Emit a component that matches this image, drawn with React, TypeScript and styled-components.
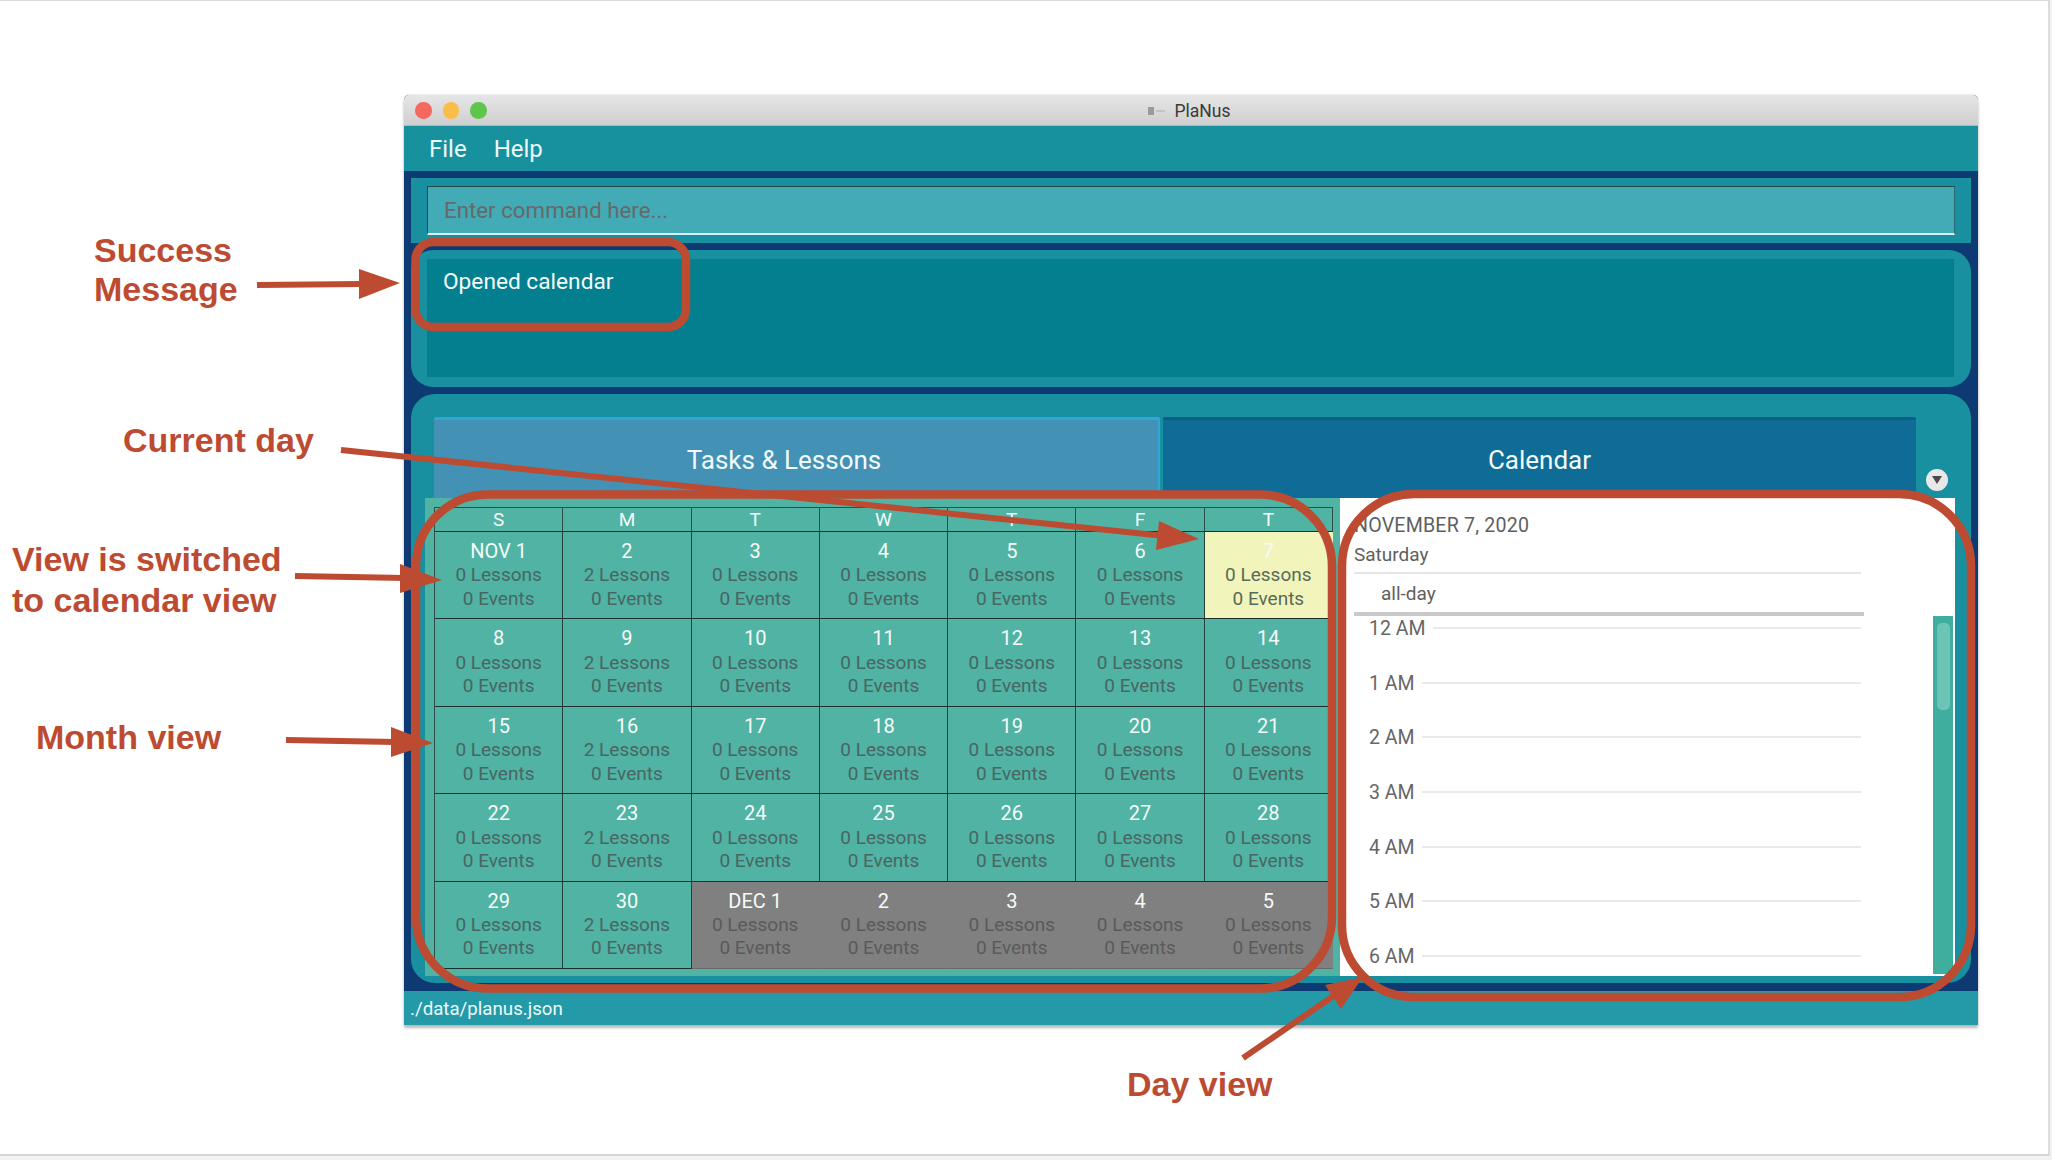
import React from 'react';
import styled, { createGlobalStyle } from 'styled-components';

const GlobalStyle = createGlobalStyle`
  html, body {
    margin: 0;
    padding: 0;
    background: #fff;
  }
  * {
    box-sizing: border-box;
  }
`;

const ANNOTATION = '#bc4b32';

const Page = styled.div`
  position: relative;
  width: 2052px;
  height: 1160px;
  overflow: hidden;
  background: #f2f2f2;
  font-family: Roboto, "Liberation Sans", sans-serif;
`;

const Sheet = styled.div`
  width: 2050px;
  height: 1156px;
  padding: 94px 0 0 404px;
  background: #fff;
  border-top: 1px solid #d9d9d9;
  border-right: 2px solid #dcdcdc;
  border-bottom: 2px solid #d4d4d4;
`;

const Window = styled.div`
  width: 1574px;
  height: 930px;
  display: flex;
  flex-direction: column;
  background: #0e3a74;
  border-radius: 5px 5px 0 0;
  box-shadow: 0 3px 3px rgba(0, 0, 0, 0.28), 0 -1px 2px rgba(0, 0, 0, 0.08);
  overflow: hidden;
`;

const TitleBar = styled.div`
  position: relative;
  height: 31px;
  flex-shrink: 0;
  display: flex;
  align-items: center;
  justify-content: center;
  background: linear-gradient(#e6e6e6, #cfcfcf);
  border-bottom: 1px solid #b5b5b5;
`;

const Lights = styled.div`
  position: absolute;
  left: 11px;
  top: 7px;
  display: flex;
  gap: 11px;
`;

const Light = styled.span<{ $color: string }>`
  width: 16.5px;
  height: 16.5px;
  border-radius: 50%;
  background: ${({ $color }) => $color};
`;

const WindowTitle = styled.div`
  display: flex;
  align-items: center;
  gap: 9px;
  margin-left: -4px;
  padding-top: 1px;
  font-size: 17.5px;
  color: #3a3a3a;
`;

const MenuBar = styled.div`
  height: 45px;
  flex-shrink: 0;
  display: flex;
  align-items: center;
  gap: 27px;
  padding: 1px 0 0 25px;
  background: #18919f;
`;

const MenuItem = styled.span`
  font-size: 24px;
  color: #eef9f9;
`;

const Body = styled.div`
  flex: 1;
  display: flex;
  flex-direction: column;
  padding: 7px 7px 8px;
`;

const CommandPanel = styled.div`
  height: 65px;
  flex-shrink: 0;
  padding: 8px 16px 8px 16px;
  background: #18909f;
`;

const CommandInput = styled.div`
  height: 49px;
  display: flex;
  align-items: center;
  padding-left: 16px;
  background: #42abb5;
  border: 1px solid #24484c;
  border-bottom: 2px solid #d5f0f1;
  border-right-color: #2c6a70;
  font-size: 22.3px;
  color: #696868;
`;

const ResultPanel = styled.div`
  height: 137px;
  flex-shrink: 0;
  margin-top: 7px;
  padding: 9px 17px 10px 16px;
  background: #18909f;
  border-radius: 22px;
`;

const ResultBox = styled.div`
  height: 100%;
  padding: 10px 16px;
  background: #037f8f;
  font-size: 22.7px;
  line-height: 26px;
  color: #f4fbfb;
`;

const MainPanel = styled.div`
  height: 589px;
  flex-shrink: 0;
  margin-top: 7px;
  padding: 23px 16px 7px 14px;
  background: #18909f;
  border-radius: 24px;
`;

const TabRow = styled.div`
  height: 81px;
  display: flex;
  gap: 3px;
  padding-left: 9px;
`;

const Tab = styled.div<{ $active?: boolean; $width: number; $textShift?: number }>`
  width: ${({ $width }) => $width}px;
  display: flex;
  align-items: center;
  justify-content: center;
  padding: 2px ${({ $textShift }) => $textShift ?? 0}px 0 0;
  font-size: 26px;
  color: #f2fafb;
  background: ${({ $active }) => ($active ? '#0f6c96' : '#4391b5')};
  border-top: 3px solid ${({ $active }) => ($active ? '#0d5f86' : '#2fa5dc')};
  border-right: ${({ $active }) => ($active ? 'none' : '2px solid #2fa5dc')};
  border-radius: 2px 2px 0 0;
`;

const TabMenu = styled.div`
  width: 22px;
  height: 22px;
  align-self: flex-end;
  margin: 0 0 7px 7px;
  display: flex;
  align-items: center;
  justify-content: center;
  border-radius: 50%;
  background: #e8e8e8;
`;

const Content = styled.div`
  display: flex;
  height: 478px;
`;

const MonthPanel = styled.div`
  width: 915px;
  flex-shrink: 0;
  padding: 9px 6px 8px 9px;
  background: #50b3a3;
`;

const MonthGrid = styled.div`
  display: grid;
  width: 899px;
  grid-template-columns: repeat(7, 1fr);
  grid-template-rows: 24px repeat(5, 87.4px);
  border-top: 1px solid #2c4f4b;
  border-left: 1px solid #2c4f4b;
`;

const WeekdayCell = styled.div`
  display: flex;
  align-items: center;
  justify-content: center;
  font-size: 19px;
  color: #f4fbfa;
  border-right: 1.5px solid #2c4f4b;
  border-bottom: 1.5px solid #1d2f2d;
`;

type CellKind = 'normal' | 'today' | 'other';

const DayCell = styled.div<{ $kind: CellKind }>`
  display: flex;
  flex-direction: column;
  align-items: center;
  padding-top: 8px;
  font-size: 19px;
  line-height: 23.4px;
  background: ${({ $kind }) =>
    $kind === 'today' ? '#f1f5bc' : $kind === 'other' ? '#808080' : 'transparent'};
  color: ${({ $kind }) =>
    $kind === 'today' ? '#5a6a59' : $kind === 'other' ? '#5a5a5a' : '#486663'};
  border-right: 1.5px solid ${({ $kind }) => ($kind === 'normal' ? '#22403d' : 'transparent')};
  border-bottom: 1.5px solid ${({ $kind }) => ($kind === 'other' ? '#6a6a6a' : '#1d2f2d')};
`;

const DayNumber = styled.div`
  font-size: 20px;
  color: #f6fbfa;
`;

const DayPanel = styled.div`
  width: 615px;
  flex-shrink: 0;
  display: flex;
  flex-direction: column;
  padding: 13px 2px 2px 14px;
  background: #fff;
  color: #5f5f5f;
  font-size: 19px;
`;

const DayTitle = styled.div`
  height: 30px;
  line-height: 30px;
  font-size: 19.6px;
  letter-spacing: 0.2px;
  flex-shrink: 0;
`;

const DayName = styled.div`
  width: 507px;
  height: 33px;
  line-height: 28px;
  flex-shrink: 0;
  border-bottom: 2px solid #e6e6e6;
`;

const AllDay = styled.div`
  width: 510px;
  height: 42px;
  flex-shrink: 0;
  padding: 8px 0 0 27px;
  line-height: 24px;
  border-bottom: 4px solid #c9c9c9;
`;

const Timeline = styled.div`
  flex: 1;
  min-height: 0;
  display: flex;
  justify-content: space-between;
`;

const Hours = styled.div`
  overflow: hidden;
`;

const HourRow = styled.div`
  width: 507px;
  height: 54.7px;
  display: flex;
  align-items: flex-start;
  gap: 7px;
  padding-left: 15px;
  color: #666;
  font-size: 19.5px;
  line-height: 26px;
`;

const HourLine = styled.div<{ $long?: boolean }>`
  flex: 1;
  height: 2px;
  margin-top: 11px;
  margin-right: ${({ $long }) => ($long ? '-7px' : '0')};
  background: #e9e9e9;
`;

const ScrollTrack = styled.div`
  width: 20px;
  padding: 7px 3px 0 4px;
  background: #3fae9f;
`;

const ScrollThumb = styled.div`
  height: 87px;
  border-radius: 5px;
  background: #6cc4b6;
`;

const StatusBar = styled.div`
  height: 34px;
  flex-shrink: 0;
  display: flex;
  align-items: center;
  padding: 2px 0 0 6px;
  background: #249aa9;
  font-size: 18.7px;
  color: #eef9f9;
`;

const Callout = styled.div<{ $x: number; $y: number }>`
  position: absolute;
  left: ${({ $x }) => $x}px;
  top: ${({ $y }) => $y}px;
  font-family: "Liberation Sans", Arial, sans-serif;
  font-weight: 700;
  font-size: 34px;
  line-height: 40px;
  white-space: nowrap;
  color: ${ANNOTATION};
`;

const Overlay = styled.svg`
  position: absolute;
  left: 0;
  top: 0;
  pointer-events: none;
`;

const WEEKDAYS = ['S', 'M', 'T', 'W', 'T', 'F', 'T'];

const CELLS = Array.from({ length: 35 }, (_, i) => {
  const isOther = i >= 30;
  const day = isOther ? i - 29 : i + 1;
  let label = String(day);
  if (i === 0) label = 'NOV 1';
  if (i === 30) label = 'DEC 1';
  const kind: CellKind = isOther ? 'other' : i === 6 ? 'today' : 'normal';
  const lessons = i % 7 === 1 && !isOther ? 2 : 0;
  return { id: i, label, kind, lessons };
});

const HOURS = ['12 AM', '1 AM', '2 AM', '3 AM', '4 AM', '5 AM', '6 AM'];

const Arrow = ({
  line,
  head,
}: {
  line: [number, number, number, number];
  head: string;
}) => (
  <>
    <line x1={line[0]} y1={line[1]} x2={line[2]} y2={line[3]} stroke={ANNOTATION} strokeWidth={6} />
    <polygon points={head} fill={ANNOTATION} />
  </>
);

export default function App() {
  return (
    <>
      <GlobalStyle />
      <Page>
        <Sheet>
          <Window>
            <TitleBar>
              <Lights>
                <Light $color="#f4695f" />
                <Light $color="#f9bd49" />
                <Light $color="#5ec54d" />
              </Lights>
              <WindowTitle>
                <svg width="18" height="8" viewBox="0 0 18 8">
                  <rect x="0" y="0" width="6" height="8" fill="#9a9a9a" />
                  <rect x="8" y="3" width="9" height="2" fill="#c4c4c4" />
                </svg>
                PlaNus
              </WindowTitle>
            </TitleBar>
            <MenuBar>
              <MenuItem>File</MenuItem>
              <MenuItem>Help</MenuItem>
            </MenuBar>
            <Body>
              <CommandPanel>
                <CommandInput>Enter command here...</CommandInput>
              </CommandPanel>
              <ResultPanel>
                <ResultBox>Opened calendar</ResultBox>
              </ResultPanel>
              <MainPanel>
                <TabRow>
                  <Tab $width={726} $textShift={24}>
                    Tasks &amp; Lessons
                  </Tab>
                  <Tab $width={753} $active>
                    Calendar
                  </Tab>
                  <TabMenu>
                    <svg width="10" height="8" viewBox="0 0 10 8">
                      <polygon points="0,0 10,0 5,8" fill="#4a4a4a" />
                    </svg>
                  </TabMenu>
                </TabRow>
                <Content>
                  <MonthPanel>
                    <MonthGrid>
                      {WEEKDAYS.map((day, i) => (
                        <WeekdayCell key={i}>{day}</WeekdayCell>
                      ))}
                      {CELLS.map((cell) => (
                        <DayCell key={cell.id} $kind={cell.kind}>
                          <DayNumber>{cell.label}</DayNumber>
                          <div>{cell.lessons} Lessons</div>
                          <div>0 Events</div>
                        </DayCell>
                      ))}
                    </MonthGrid>
                  </MonthPanel>
                  <DayPanel>
                    <DayTitle>NOVEMBER 7, 2020</DayTitle>
                    <DayName>Saturday</DayName>
                    <AllDay>all-day</AllDay>
                    <Timeline>
                      <Hours>
                        {HOURS.map((hour, i) => (
                          <HourRow key={hour}>
                            {hour}
                            <HourLine $long={i === 0} />
                          </HourRow>
                        ))}
                      </Hours>
                      <ScrollTrack>
                        <ScrollThumb />
                      </ScrollTrack>
                    </Timeline>
                  </DayPanel>
                </Content>
              </MainPanel>
            </Body>
            <StatusBar>./data/planus.json</StatusBar>
          </Window>
        </Sheet>

        <Callout $x={94} $y={230}>Success</Callout>
        <Callout $x={94} $y={269}>Message</Callout>
        <Callout $x={123} $y={420}>Current day</Callout>
        <Callout $x={12} $y={539}>View is switched</Callout>
        <Callout $x={12} $y={580}>to calendar view</Callout>
        <Callout $x={36} $y={717}>Month view</Callout>
        <Callout $x={1127} $y={1064}>Day view</Callout>

        <Overlay width="2052" height="1160" viewBox="0 0 2052 1160">
          <g fill="none" stroke={ANNOTATION} strokeWidth={8.5}>
            <rect x={415.5} y={242} width={270.5} height={85} rx={18} />
            <rect x={416} y={494.5} width={916} height={494} rx={72} />
            <rect x={1342} y={494} width={629} height={503} rx={72} />
          </g>
          <Arrow line={[257, 285, 362, 284]} head="359,269 400,283 359,299" />
          <Arrow line={[341, 450, 1165, 536]} head="1159,521 1199,539 1156,550" />
          <Arrow line={[295, 576, 405, 578]} head="400,564 442,580 400,593" />
          <Arrow line={[286, 740, 395, 742]} head="391,727 433,743 391,757" />
          <Arrow line={[1243, 1058, 1335, 995]} head="1325,985 1363,977 1341,1009" />
        </Overlay>
      </Page>
    </>
  );
}
